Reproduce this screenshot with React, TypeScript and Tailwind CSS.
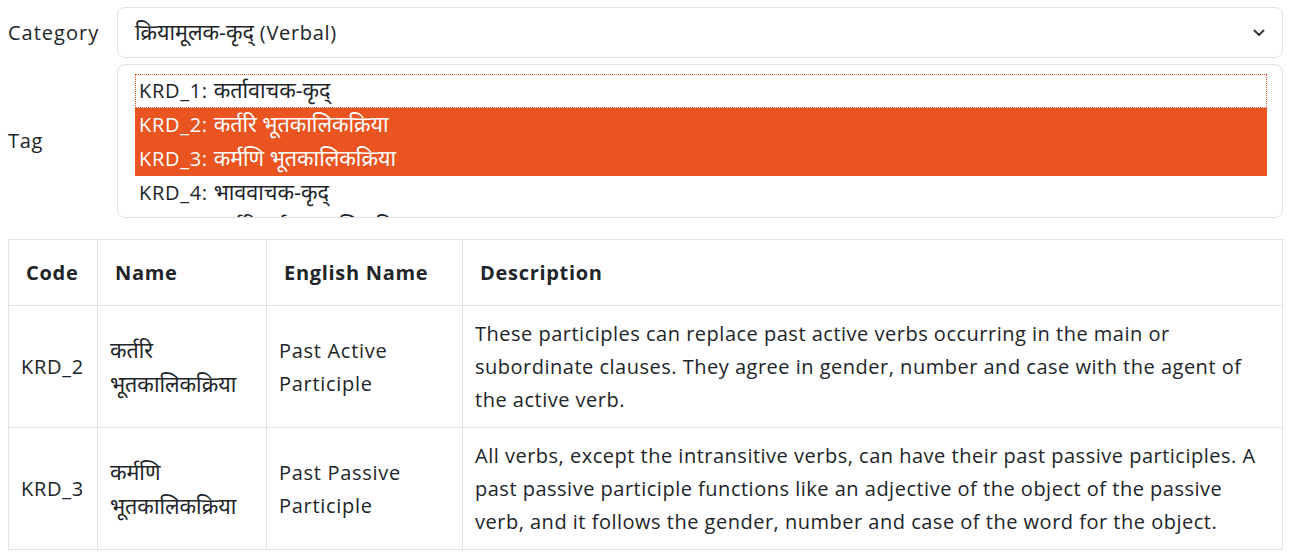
import { useState } from "react";

const TAGS = [
  { code: "KRD_1", label: "कर्तावाचक-कृद्" },
  { code: "KRD_2", label: "कर्तरि भूतकालिकक्रिया" },
  { code: "KRD_3", label: "कर्मणि भूतकालिकक्रिया" },
  { code: "KRD_4", label: "भाववाचक-कृद्" },
  { code: "KRD_5", label: "कर्तरि वर्तमानकालिकक्रिया" },
];

const ROWS = [
  {
    code: "KRD_2",
    name: "कर्तरि भूतकालिकक्रिया",
    english: "Past Active Participle",
    lines: [
      "These participles can replace past active verbs occurring in the main or",
      "subordinate clauses. They agree in gender, number and case with the agent of",
      "the active verb.",
    ],
  },
  {
    code: "KRD_3",
    name: "कर्मणि भूतकालिकक्रिया",
    english: "Past Passive Participle",
    lines: [
      "All verbs, except the intransitive verbs, can have their past passive participles. A",
      "past passive participle functions like an adjective of the object of the passive",
      "verb, and it follows the gender, number and case of the word for the object.",
    ],
  },
];

// Devanagari runs: slightly larger, no letter spacing so shaping stays intact
function Dev({ children }: { children: string }) {
  return <span className="text-[21.5px] tracking-normal">{children}</span>;
}

export default function App() {
  const [selected] = useState(["KRD_2", "KRD_3"]);

  return (
    <div
      className="pl-2 pr-[9px] pt-[7px] text-[20px] tracking-[0.035em] text-[#212529] bg-white"
      style={{ fontFamily: "'Open Sans', 'Noto Sans', 'Noto Sans Devanagari', sans-serif" }}
    >
      {/* Category */}
      <div className="grid grid-cols-[109px_1fr] items-center">
        <span className="tracking-[0.05em]">Category</span>
        <div className="flex items-center justify-between h-[51px] border border-[#dee2e6] rounded-lg pl-[17px] pr-[17px]">
          <span>
            <Dev>क्रियामूलक-कृद्</Dev> (Verbal)
          </span>
          <svg width="12" height="8" viewBox="0 0 12 8" fill="none">
            <path d="M1.5 1.5L6 6l4.5-4.5" stroke="#343a40" strokeWidth="2" strokeLinecap="round" strokeLinejoin="round" />
          </svg>
        </div>
      </div>

      {/* Tag */}
      <div className="grid grid-cols-[109px_1fr] items-center mt-[6px]">
        <span>Tag</span>
        <div className="h-[154px] border border-[#dee2e6] rounded-lg pl-[17px] pr-[15px] pt-[9px] overflow-hidden">
          {TAGS.map((t, i) => {
            const on = selected.includes(t.code);
            return (
              <div
                key={t.code}
                className={
                  "h-[34px] leading-[32px] pl-1 whitespace-nowrap " +
                  (on ? "bg-[#e95420] text-white " : "") +
                  (i === 0 ? "outline outline-1 outline-dotted outline-[#e95420] -outline-offset-1" : "")
                }
              >
                {t.code}: <Dev>{t.label}</Dev>
              </div>
            );
          })}
        </div>
      </div>

      {/* Table */}
      <table className="mt-[21px] w-full table-fixed border-collapse">
        <colgroup>
          <col className="w-[89px]" />
          <col className="w-[169px]" />
          <col className="w-[196px]" />
          <col />
        </colgroup>
        <thead>
          <tr>
            {["Code", "Name", "English Name", "Description"].map((h) => (
              <th key={h} className="border border-[#dee2e6] px-[17px] py-4 text-left font-bold leading-[33px]">
                {h}
              </th>
            ))}
          </tr>
        </thead>
        <tbody>
          {ROWS.map((r) => (
            <tr key={r.code}>
              <td className="border border-[#dee2e6] px-3 py-[11px] leading-[33px]">{r.code}</td>
              <td className="border border-[#dee2e6] px-3 py-[11px] leading-[33px]">
                <Dev>{r.name}</Dev>
              </td>
              <td className="border border-[#dee2e6] px-3 py-[11px] leading-[33px]">{r.english}</td>
              <td className="border border-[#dee2e6] px-3 py-[11px] leading-[33px] whitespace-nowrap tracking-[0.025em]">
                {r.lines.map((l, i) => (
                  <div key={i}>{l}</div>
                ))}
              </td>
            </tr>
          ))}
        </tbody>
      </table>
    </div>
  );
}
